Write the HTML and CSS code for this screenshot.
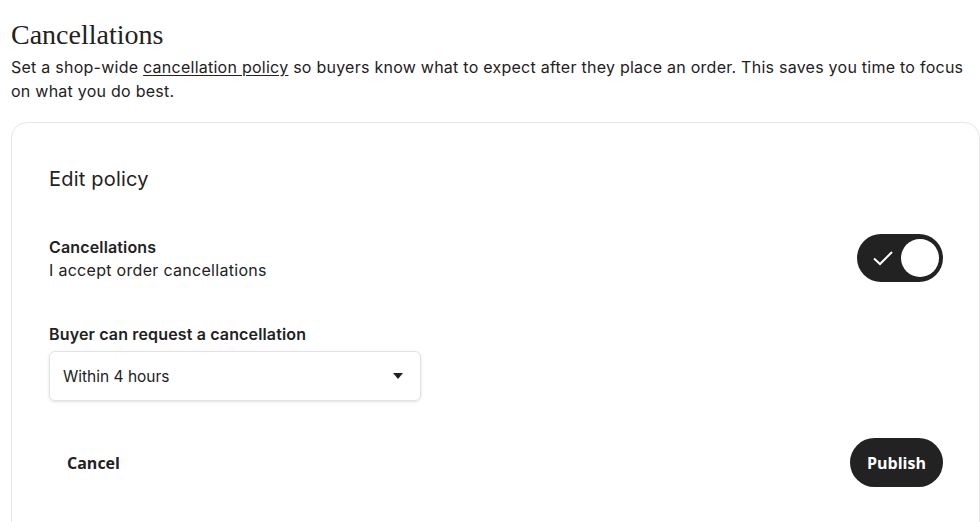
FILE: index.html
```html
<!DOCTYPE html>
<html>
<head>
<meta charset="utf-8">
<link rel="stylesheet" href="styles.css">
</head>
<body>
<main class="page">
  <h1 class="title">Cancellations</h1>
  <p class="intro">Set a shop-wide <a class="link" href="#">cancellation policy</a> so buyers know what to expect after they place an order. This saves you time to focus on what you do best.</p>
  <section class="card">
    <h2 class="card-title">Edit policy</h2>
    <div class="row">
      <div class="row-text">
        <div class="label">Cancellations</div>
        <div class="sub">I accept order cancellations</div>
      </div>
      <div class="toggle">
        <svg class="check" width="22" height="18" viewBox="0 0 22 18"><path d="M2 9.5 L8 15 L20 3" fill="none" stroke="#fff" stroke-width="2"/></svg>
        <span class="knob"></span>
      </div>
    </div>
    <div class="field">
      <div class="label">Buyer can request a cancellation</div>
      <div class="select">
        <span>Within 4 hours</span>
        <span class="caret"></span>
      </div>
    </div>
    <div class="actions">
      <button class="btn-cancel">Cancel</button>
      <button class="btn-publish">Publish</button>
    </div>
  </section>
</main>
</body>
</html>
```
FILE: styles.css
```css
html, body { margin: 0; padding: 0; background: #fff; }
body { font-family: "Inter", "Liberation Sans", sans-serif; color: #222; overflow: hidden; }
.page { padding: 17px 0 0 11px; }
.title { font-family: "Liberation Serif", serif; font-weight: 400; font-size: 28px; line-height: 36px; margin: 0; color: #222; }
.intro { font-size: 16px; line-height: 24px; margin: 2px 0 0; color: #222; padding-right: 10px; letter-spacing: 0.25px; }
.link { color: #222; text-decoration: underline; text-underline-offset: 2px; }
.card { margin-top: 19px; width: 894px; border: 1px solid #e6e6e6; border-radius: 16px; padding: 42px 36px 60px 37px; height: 400px; }
.card-title { font-size: 20px; font-weight: 400; line-height: 28px; margin: 0; letter-spacing: 0.2px; }
.row { display: flex; justify-content: space-between; align-items: center; margin-top: 43px; }
.label { font-size: 16px; font-weight: 600; line-height: 22px; letter-spacing: 0.15px; }
.sub { font-size: 16px; line-height: 24px; letter-spacing: 0.3px; }
.toggle { width: 86px; height: 48px; background: #222; border-radius: 24px; display: flex; align-items: center; justify-content: space-between; padding: 0 4px 0 15px; box-sizing: border-box; margin-top: -2px; }
.knob { width: 38px; height: 38px; border-radius: 50%; background: #fff; }
.field { margin-top: 41px; }
.select { margin-top: 6px; width: 372px; height: 50px; box-sizing: border-box; border: 1px solid #e3e3e3; border-radius: 6px; box-shadow: 0 1px 3px rgba(0,0,0,0.12); display: flex; align-items: center; justify-content: space-between; padding: 0 17px 0 13px; font-size: 15.5px; }
.caret { width: 0; height: 0; border-left: 5px solid transparent; border-right: 5px solid transparent; border-top: 6px solid #222; }
.actions { display: flex; justify-content: space-between; align-items: center; margin-top: 37px; }
.btn-cancel { background: none; border: none; font-family: "Open Sans", sans-serif; font-weight: 700; font-size: 16px; padding: 0 0 0 18px; color: #222; }
.btn-publish { background: #222; color: #fff; border: none; border-radius: 25px; width: 93px; height: 49px; font-family: "Open Sans", sans-serif; font-weight: 700; font-size: 16px; }
```
